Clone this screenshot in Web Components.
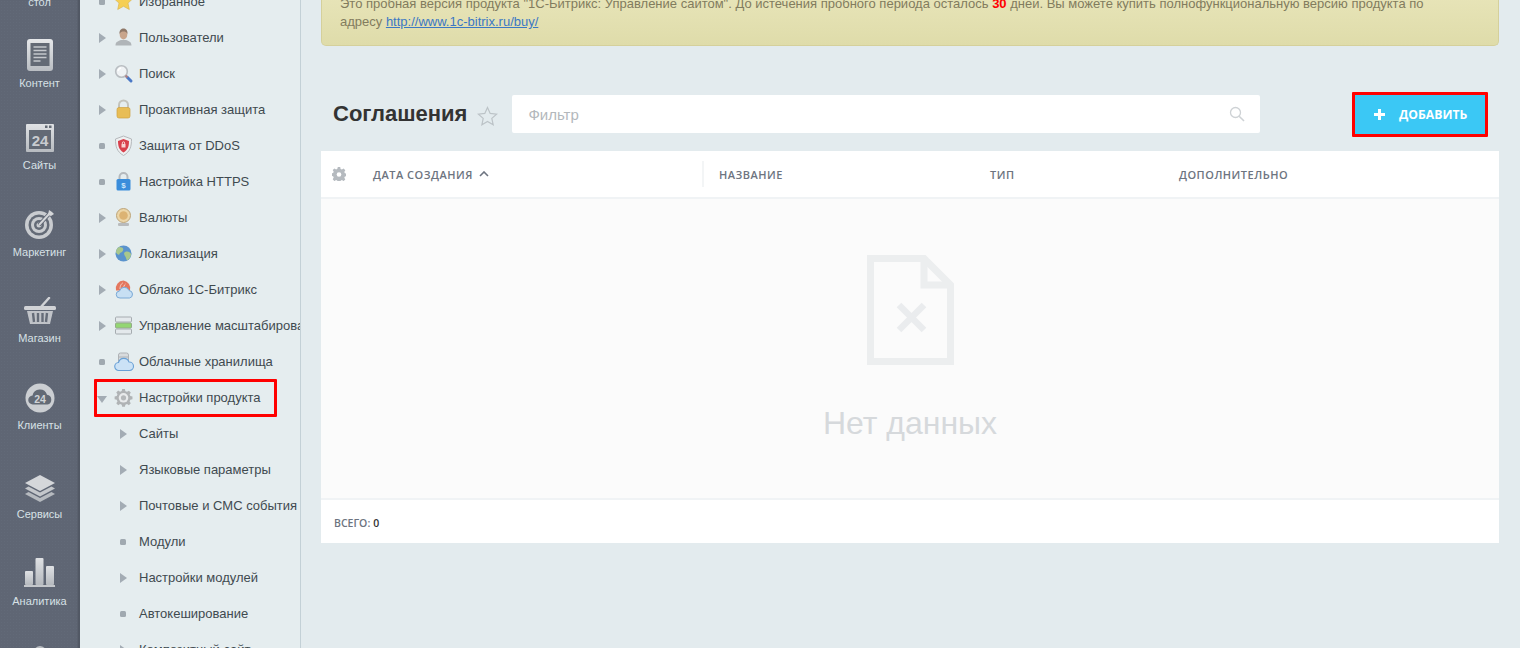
<!DOCTYPE html>
<html lang="ru"><head><meta charset="utf-8"><title>Соглашения</title>
<style>
html,body{margin:0;height:648px;overflow:hidden;background:#e3ebee;font-family:"Liberation Sans",Arial,sans-serif}
</style></head><body>
<admin-page>
  <admin-rail slot="rail">
    <rail-item label="стол" h="9" icon=""></rail-item>
    <rail-item label="Контент" h="81" icon="content"></rail-item>
    <rail-item label="Сайты" h="82" icon="sites"></rail-item>
    <rail-item label="Маркетинг" h="87" icon="target"></rail-item>
    <rail-item label="Магазин" h="86" icon="basket"></rail-item>
    <rail-item label="Клиенты" h="87" icon="cloud"></rail-item>
    <rail-item label="Сервисы" h="89" icon="layers"></rail-item>
    <rail-item label="Аналитика" h="87" icon="chart"></rail-item>
    <rail-more></rail-more>
  </admin-rail>
  <admin-tree slot="tree">
    <tree-row marker="dot" icon="star">Избранное</tree-row>
    <tree-row marker="arrow" icon="user">Пользователи</tree-row>
    <tree-row marker="arrow" icon="search">Поиск</tree-row>
    <tree-row marker="arrow" icon="lock">Проактивная защита</tree-row>
    <tree-row marker="dot" icon="shield">Защита от DDoS</tree-row>
    <tree-row marker="dot" icon="https">Настройка HTTPS</tree-row>
    <tree-row marker="arrow" icon="coin">Валюты</tree-row>
    <tree-row marker="arrow" icon="globe">Локализация</tree-row>
    <tree-row marker="arrow" icon="bxcloud">Облако 1С-Битрикс</tree-row>
    <tree-row marker="arrow" icon="servers">Управление масштабированием</tree-row>
    <tree-row marker="dot" icon="storage">Облачные хранилища</tree-row>
    <tree-row marker="open" icon="gear" marked>Настройки продукта</tree-row>
    <tree-row marker="arrow" depth="1">Сайты</tree-row>
    <tree-row marker="arrow" depth="1">Языковые параметры</tree-row>
    <tree-row marker="arrow" depth="1">Почтовые и СМС события</tree-row>
    <tree-row marker="dot" depth="1">Модули</tree-row>
    <tree-row marker="arrow" depth="1">Настройки модулей</tree-row>
    <tree-row marker="dot" depth="1">Автокеширование</tree-row>
    <tree-row marker="arrow" depth="1">Композитный сайт</tree-row>
  </admin-tree>
  <trial-banner>Это пробная версия продукта "1С-Битрикс: Управление сайтом". До истечения пробного периода осталось <b>30</b> дней. Вы можете купить полнофункциональную версию продукта по адресу <a>http://www.1c-bitrix.ru/buy/</a></trial-banner>
  <page-toolbar heading="Соглашения"></page-toolbar>
  <data-grid></data-grid>
</admin-page>
<script>
const define=(name,html)=>customElements.define(name,class extends HTMLElement{
  connectedCallback(){ if(this.shadowRoot)return; this.attachShadow({mode:'open'}).innerHTML=typeof html==='function'?html(this):html; }
});
define('admin-page',`<style>
:host{display:grid;grid-template-columns:80px 221px 1fr;width:1520px;height:648px;overflow:hidden}
.main{min-width:0;padding:0 21px 0 20px;display:flex;flex-direction:column;align-items:stretch}
</style><slot name="rail"></slot><slot name="tree"></slot><div class="main"><slot></slot></div>`);
define('admin-rail',`<style>
:host{display:block;height:648px;overflow:hidden;box-sizing:border-box;width:80px;border-right:1px solid #515864;
background-color:#5f6674;background-image:radial-gradient(#626a78 1px,transparent 1px);background-size:3px 3px;box-shadow:inset -2px 0 2px -1px rgba(0,0,0,.18)}
.w{display:flex;flex-direction:column}
</style><div class="w"><slot></slot></div>`);
define('rail-more',`<style>:host{display:flex;justify-content:center;margin-top:38px}
i{display:block;width:12px;height:12px;border-radius:50%;background:#b9bdc2}</style><i></i>`);
const railIcons={
 content:`<svg width="30" height="34" viewBox="0 0 30 34"><defs><linearGradient id="g" x1="0" y1="0" x2="0" y2="1"><stop offset="0" stop-color="#e6e8ea"/><stop offset="1" stop-color="#b9bdc2"/></linearGradient></defs><rect x="2" y="1" width="26" height="32" rx="3" fill="url(#g)"/><rect x="5.500" y="5" width="19" height="23" fill="#636a75"/><path d="M8.500 9h13M8.500 12.500h13M8.500 16h13M8.500 19.500h13M8.500 23h7" stroke="#c4c7cc" stroke-width="1.600"/></svg>`,
 sites:`<svg width="30" height="30" viewBox="0 0 30 30"><defs><linearGradient id="g" x1="0" y1="0" x2="0" y2="1"><stop offset="0" stop-color="#e0e2e5"/><stop offset="1" stop-color="#b7bbc0"/></linearGradient></defs><rect x="1" y="1" width="28" height="28" rx="1" fill="url(#g)"/><rect x="4" y="7" width="22" height="19" fill="#636a75"/><rect x="20" y="2.500" width="2.500" height="2.500" fill="#636a75"/><rect x="24" y="2.500" width="2.500" height="2.500" fill="#636a75"/><text x="15" y="22.500" text-anchor="middle" font-family="Liberation Sans" font-weight="700" font-size="15" fill="#c9ccd0">24</text></svg>`,
 target:`<svg width="32" height="32" viewBox="0 0 32 32"><circle cx="15" cy="17" r="14" fill="#c9ccd0"/><circle cx="15" cy="17" r="10.500" fill="#646b77"/><circle cx="15" cy="17" r="8" fill="#c9ccd0"/><circle cx="15" cy="17" r="5" fill="#646b77"/><circle cx="15" cy="17" r="2.500" fill="#c9ccd0"/><path d="M15 17L27 4" stroke="#5f6674" stroke-width="4"/><path d="M15 17L26 5" stroke="#d4d6d9" stroke-width="2"/><path d="M24 7l1-5 3 2 2 2-3 2z" fill="#d4d6d9"/></svg>`,
 basket:`<svg width="34" height="28" viewBox="0 0 34 28"><path d="M17 11L26 1" stroke="#d1d3d6" stroke-width="2.500" stroke-linecap="round"/><rect x="1" y="9" width="32" height="4" rx="1.500" fill="#d1d3d6"/><path d="M4 14h26l-3 13H7z" fill="#c0c3c8"/><path d="M10 16l1 9M15 16v9M19.500 16v9M24 16l-1 9" stroke="#656c78" stroke-width="2.400"/></svg>`,
 cloud:`<svg width="32" height="30" viewBox="0 0 32 30"><circle cx="16" cy="15" r="14.500" fill="#cbced2"/><path d="M9 21.500a4.500 4.500 0 0 1-.5-9 7.500 7.500 0 0 1 14.500-.8 5 5 0 0 1 .5 9.800z" fill="#636a75"/><text x="16" y="19.500" text-anchor="middle" font-family="Liberation Sans" font-weight="700" font-size="10.500" fill="#d0d3d6">24</text></svg>`,
 layers:`<svg width="32" height="28" viewBox="0 0 32 28"><path d="M16 1l15 8-15 8L1 9z" fill="#d5d7da"/><path d="M4.500 12.500L16 18.600l11.500-6.100 3.500 2L16 22.500 1 14.500z" fill="#c4c7cb"/><path d="M4.500 18L16 24.100 27.500 18l3.500 2-15 8-15-8z" fill="#b6babf"/></svg>`,
 chart:`<svg width="34" height="32" viewBox="0 0 34 32"><defs><linearGradient id="g" x1="0" y1="0" x2="0" y2="1"><stop offset="0" stop-color="#dfe1e4"/><stop offset="1" stop-color="#b5b9be"/></linearGradient></defs><rect x="2" y="15" width="8" height="14" rx="1" fill="url(#g)"/><rect x="12.500" y="2" width="8" height="27" rx="1" fill="url(#g)"/><rect x="23" y="10" width="8" height="19" rx="1" fill="url(#g)"/><rect x="1" y="29" width="31" height="2" fill="#c4c7cb"/></svg>`
};
define('rail-item',el=>`<style>
:host{display:flex;flex-direction:column;align-items:center;justify-content:flex-end;height:${el.getAttribute('h')}px;width:79px}
.i{display:flex;justify-content:center;margin-bottom:${({content:4,sites:5,target:5,basket:6,cloud:5,layers:5,chart:6})[el.getAttribute('icon')]||0}px}
.l{font-size:11px;line-height:14px;color:#d7e1e6;white-space:nowrap}
svg{display:block}
</style><div class="i">${railIcons[el.getAttribute('icon')]||''}</div><div class="l">${el.getAttribute('label')}</div>`);
define('admin-tree',`<style>
:host{display:block;box-sizing:border-box;width:221px;height:648px;overflow:hidden;border-right:1px solid #c3d0d6;background:#e5edef}
.w{margin-top:-17px}
</style><div class="w"><slot></slot></div>`);
const treeIcons={
 star:`<path d="M9.500 0l2.800 6 6.500.7-4.800 4.400 1.300 6.400-5.800-3.200-5.800 3.200 1.300-6.400L.2 6.700 6.700 6z" fill="#f5cf55" stroke="#d8b045" stroke-width=".6"/>`,
 user:`<path d="M1.500 17.500c0-4 3-4.500 5.500-5.500h5c2.500 1 5.500 1.500 5.500 5.500z" fill="#b0b5b8"/><ellipse cx="9.500" cy="6.500" rx="3.800" ry="5" fill="#c8a58c"/><path d="M5.500 6c-.4-4 2-5.500 4-5.500s4.400 1.500 4 5.500c-1-2-2.300-2.500-4-2.500S6.500 4 5.500 6z" fill="#8f7868"/>`,
 search:`<circle cx="7.500" cy="7.500" r="5.800" fill="#f0f3f5" stroke="#b9bec2" stroke-width="1.600"/><path d="M4 7a4 4 0 0 1 3-3" stroke="#fff" stroke-width="1.500" fill="none"/><path d="M13 13l4 4" stroke="#4a78c6" stroke-width="3" stroke-linecap="round"/><path d="M11.500 11.500l2 2" stroke="#b08080" stroke-width="2"/>`,
 lock:`<path d="M5 8V5a4.500 4.500 0 0 1 9 0v3" fill="none" stroke="#c3c3bc" stroke-width="2"/><rect x="3" y="7.500" width="13" height="10.500" rx="2" fill="#e8bd55" stroke="#cfa040" stroke-width=".7"/>`,
 shield:`<path d="M9.500 0l8 3c0 7-1 12.500-8 16.500-7-4-8-9.500-8-16.500z" fill="#eef0f1" stroke="#b5b9bc"/><path d="M9.500 3l5.500 2c0 5-1 9-5.500 11.500C5 14 4 10 4 5z" fill="#d8404c"/><rect x="7.500" y="8" width="4" height="3.500" fill="#f7d4d4"/><path d="M8.300 8V7a1.200 1.200 0 0 1 2.400 0v1" stroke="#f7d4d4" fill="none"/>`,
 https:`<path d="M5.500 8V5a4 4 0 0 1 8 0v3" fill="none" stroke="#b4b9bd" stroke-width="2"/><rect x="2.500" y="7" width="14" height="11.500" rx="1.500" fill="#3a8ddb"/><text x="9.500" y="16" text-anchor="middle" font-family="Liberation Sans" font-weight="700" font-size="8" fill="#cfe6fa">$</text>`,
 coin:`<circle cx="9.500" cy="7.500" r="7" fill="#ecd6a8" stroke="#bda57a"/><circle cx="9.500" cy="7.500" r="4.300" fill="#dcb373"/><rect x="4" y="15" width="11" height="3" rx="1" fill="#b8bbbd"/>`,
 globe:`<circle cx="9.500" cy="9.500" r="8" fill="#5a93cd"/><path d="M5 3c3 0 5 1 4 3.500S6 8 5.500 10 3 10 2 8.500C2 6 3 4 5 3zM11 8c3-1 5 0 6 2 0 3-2 5.500-4 6.500-1-2-1-3-2-4.500S9.500 9 11 8z" fill="#a9c78c"/>`,
 bxcloud:`<path d="M9.500 .5a8 8 0 0 0-7.500 10l14 0a8 8 0 0 0-6.500-10z" fill="#e4775f"/><path d="M6 9c0-4 2-6 3-6M9.500 10c0-3 .5-5 2-6" stroke="#f5d2c8" stroke-width="1" fill="none"/><path d="M6 18a3.500 3.500 0 0 1-.5-7 5 5 0 0 1 9.500-.5 3.800 3.800 0 0 1 .5 7.500z" fill="#c7dff3" stroke="#7aa9d6"/>`,
 servers:`<rect x="1.500" y="1" width="16" height="5" rx="1" fill="#e4e9ec" stroke="#a6acb0"/><rect x="1.500" y="7" width="16" height="5" rx="1" fill="#93d672" stroke="#94ab8a"/><rect x="1.500" y="13" width="16" height="5" rx="1" fill="#e4e9ec" stroke="#a6acb0"/>`,
 storage:`<rect x="4.500" y="1" width="10" height="11" rx="2" fill="#d8dbdd" stroke="#aeb2b6"/><path d="M5 5h9" stroke="#aeb2b6"/><path d="M5 18.500a4 4 0 0 1-.5-8 5.500 5.500 0 0 1 10.500-.5 4.200 4.200 0 0 1 .5 8.500z" fill="#cbe2f6" stroke="#68a0d6" stroke-width="1.100"/>`,
 gear:`<path d="M8 1h3l.5 2.300 1.800.8 2-1.300 2.100 2.100-1.300 2 .8 1.800 2.300.5v3l-2.300.5-.8 1.800 1.300 2-2.100 2.100-2-1.300-1.800.8-.5 2.300H8l-.5-2.300-1.800-.8-2 1.300-2.100-2.100 1.300-2-.8-1.800L-.2 12V9l2.300-.5.8-1.800-1.300-2 2.100-2.100 2 1.300 1.800-.8z" transform="translate(.8 .1) scale(.92)" fill="#b0b3b5"/><circle cx="9.500" cy="9.800" r="4.800" fill="#e8eaeb"/><circle cx="9.500" cy="9.800" r="2.600" fill="#b5b8ba"/>`
};
define('tree-row',el=>{
 const d=+(el.getAttribute('depth')||0),m=el.getAttribute('marker'),ic=el.getAttribute('icon');
 const mk=m==='dot'?'<i class="dot"></i>':m==='open'?'<i class="open"></i>':'<i class="arr"></i>';
 return `<style>
:host{display:flex;align-items:center;height:36px;position:relative;white-space:nowrap;font-size:13px;color:#3f4a4f;padding-left:${d?37:16}px}
.m{width:12px;flex:none;display:flex;justify-content:center;align-items:center;margin-top:2px;margin-right:${d?10:6}px}
.dot{width:6px;height:6px;border-radius:1.500px;background:#a0a9b0}
.arr{border-left:7px solid #a3acb4;border-top:5px solid transparent;border-bottom:5px solid transparent}
.open{border-top:7px solid #a3acb4;border-left:5px solid transparent;border-right:5px solid transparent;margin-top:2px}
svg{flex:none;margin-right:6px;display:block;overflow:visible}
:host([marked])::after{content:"";position:absolute;left:14px;top:0;width:177px;height:32px;border:3px solid #f00;border-radius:1px}
</style><span class="m">${mk}</span>${ic?`<svg width="19" height="19" viewBox="0 0 19 19">${treeIcons[ic]}</svg>`:''}<slot></slot>`;
});
define('trial-banner',`<style>
:host{display:block;box-sizing:border-box;margin-top:-15px;height:61px;padding:10px 60px 0 18px;border:1px solid #d5d09b;border-top:0;border-radius:0 0 5px 5px;
background:linear-gradient(#e9e6bb,#dfdcaa);font-size:13px;line-height:18px;color:#827c5e}
::slotted(b){color:#f00}
::slotted(a){color:#3b78c4;text-decoration:underline}
</style><slot></slot>`);
define('page-toolbar',el=>`<style>
:host{display:flex;align-items:center;margin-top:48px;height:40px;padding-left:12px}
h1{margin:0;font-size:22px;line-height:38px;font-weight:700;color:#333;white-space:nowrap}
.star{margin:3px 14px 0 10px;display:block}
.f{flex:none;box-sizing:border-box;width:748px;height:38px;background:#fff;border-radius:2px;display:flex;align-items:center;justify-content:space-between;padding:0 15px 0 16px;font-size:15px;color:#b3b8bc}
.btn{margin-left:auto;margin-right:11px;box-sizing:border-box;width:136px;height:45px;border:3px solid #f00;border-radius:1px;background:#3bc8f5;color:#fff;display:flex;align-items:center;padding-left:19px;font:700 12.200px "Open Sans",sans-serif}
.btn svg{margin-right:14px}
</style><h1>${el.getAttribute('heading')}</h1>
<svg class="star" width="21" height="20" viewBox="0 0 21 20"><path d="M10.500 1.500l2.700 5.900 6.400.7-4.800 4.300 1.400 6.300-5.700-3.200-5.600 3.200 1.300-6.300L1.400 8.100l6.400-.7z" fill="none" stroke="#bcc3c7" stroke-width="1.200"/></svg>
<div class="f"><span>Фильтр</span><svg width="16" height="16" viewBox="0 0 16 16"><circle cx="6.500" cy="6.500" r="5" fill="none" stroke="#ced2d5" stroke-width="1.300"/><path d="M10.200 10.200L15 15" stroke="#ced2d5" stroke-width="1.600"/></svg></div>
<div class="btn"><svg width="11" height="11" viewBox="0 0 11 11"><path d="M5.500 0v11M0 5.500h11" stroke="#fff" stroke-width="3"/></svg>ДОБАВИТЬ</div>`);
define('data-grid',`<style>
:host{display:block;margin-top:17px;background:#fff}
.h{display:grid;grid-template-columns:36px 345px 272px 189px 1fr;height:46px;border-bottom:2px solid #f0f3f5;font:600 11px "Open Sans",sans-serif;letter-spacing:.5px;color:#6d7480;align-items:center}
.h>div{padding-left:16px;display:flex;align-items:center;box-sizing:border-box;height:26px;white-space:nowrap}
.h>.g{padding-left:11px}
.h>.n{border-left:2px solid #f3f5f6;padding-left:15px}
.h svg.c{margin-left:6px}
.b{height:299px;background:#fbfbfb;border-bottom:2px solid #f0f3f5;display:flex;flex-direction:column;align-items:center}
.b svg{margin-top:56px;display:block}
.e{font-size:32px;line-height:38px;margin-top:39px;color:#d6d9dc}
.t{height:43px;display:flex;align-items:center;padding:2px 0 0 13px;box-sizing:border-box;font:600 10.500px "Open Sans",sans-serif;color:#6d7480}
.t b{margin-left:3px;color:#333;font-weight:600}
</style>
<div class="h"><div class="g"><svg width="14" height="14" viewBox="0 0 14 14"><path d="M5.800 0h2.400l.4 1.900 1.300.6 1.700-1 1.700 1.700-1 1.700.6 1.300 1.900.4v2.400l-1.900.4-.6 1.300 1 1.700-1.700 1.700-1.700-1-1.300.6-.4 1.900H5.800l-.4-1.900-1.300-.6-1.700 1L.7 12.300l1-1.700-.6-1.300-1.900-.4V6.500l1.900-.4.6-1.300-1-1.700L2.400 1.400l1.700 1 1.300-.6z" fill="#b5babf"/><circle cx="7" cy="7.500" r="2.300" fill="#fff"/></svg></div>
<div>ДАТА СОЗДАНИЯ<svg class="c" width="10" height="6" viewBox="0 0 10 6"><path d="M1 5l4-4 4 4" fill="none" stroke="#6d7480" stroke-width="1.600"/></svg></div><div class="n">НАЗВАНИЕ</div><div>ТИП</div><div>ДОПОЛНИТЕЛЬНО</div></div>
<div class="b"><svg width="87" height="110" viewBox="0 0 87 110"><path d="M3.500 3.500H57L83.500 30v76.500h-80z" fill="none" stroke="#eceeef" stroke-width="7"/><path d="M57 3.500V30h26.500" fill="none" stroke="#eceeef" stroke-width="7"/><path d="M32 50l25 25M57 50L32 75" stroke="#eaecee" stroke-width="6.500"/></svg><div class="e">Нет данных</div></div>
<div class="t">ВСЕГО: <b>0</b></div>`);
</script>
</body></html>
